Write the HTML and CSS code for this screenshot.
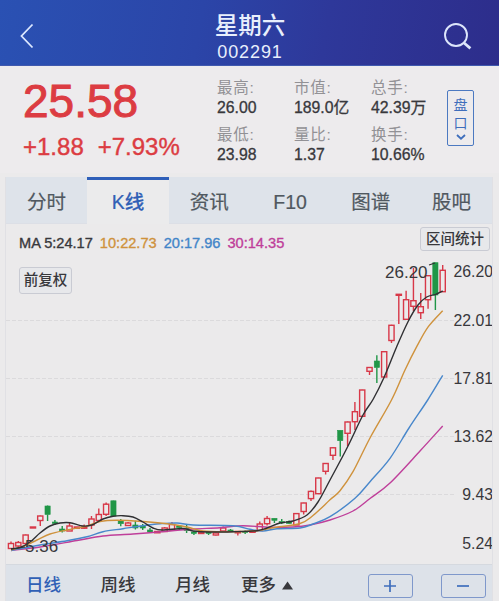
FILE: index.html
```
<!DOCTYPE html>
<html lang="zh-Hans">
<head>
    <meta charset="UTF-8">
    <meta name="viewport" content="width=device-width, initial-scale=1.0">
    <title>星期六 002291</title>
    <link rel="stylesheet" href="styles.css">
</head>
<body>
    <header class="header">
        <svg class="back" width="14" height="26" viewBox="0 0 14 26"><path d="M12.5 1.5L1.5 13L12.5 24.5"/></svg>
        <div class="title">
            <h1>星期六</h1>
            <p>002291</p>
        </div>
        <svg class="search" width="28" height="28" viewBox="0 0 28 28"><circle cx="12" cy="12" r="11"/><path class="handle" d="M19.8 19.8L26.4 25.4"/></svg>
    </header>

    <section class="quote">
        <div class="price">
            <div class="now">25.58</div>
            <div class="change"><span>+1.88</span><span>+7.93%</span></div>
        </div>
        <dl class="stats">
            <div><dt>最高:</dt><dd>26.00</dd></div>
            <div><dt>市值:</dt><dd>189.0亿</dd></div>
            <div><dt>总手:</dt><dd>42.39万</dd></div>
            <div><dt>最低:</dt><dd>23.98</dd></div>
            <div><dt>量比:</dt><dd>1.37</dd></div>
            <div><dt>换手:</dt><dd>10.66%</dd></div>
        </dl>
        <button class="pankou">
            <span>盘</span><span>口</span>
            <svg width="10" height="6" viewBox="0 0 10 6"><path d="M1 1L5 4.7L9 1"/></svg>
        </button>
    </section>

    <main class="panel">
        <nav class="tabs">
            <a>分时</a>
            <a class="active">K线</a>
            <a>资讯</a>
            <a>F10</a>
            <a>图谱</a>
            <a>股吧</a>
        </nav>

        <div class="chart">
            <svg id="kline" width="488" height="340" viewBox="5 224 488 340"></svg>
            <div class="legend">
                <span>MA 5:24.17</span>
                <span class="ma10">10:22.73</span>
                <span class="ma20">20:17.96</span>
                <span class="ma30">30:14.35</span>
            </div>
            <button class="tag stat">区间统计</button>
            <button class="tag fuquan">前复权</button>
        </div>

        <div class="toolbar">
            <a class="active">日线</a>
            <a>周线</a>
            <a class="month">月线</a>
            <a class="more">更多<svg width="11" height="9" viewBox="0 0 11 9"><path d="M5.5 0.5L11 8.5H0Z"/></svg></a>
            <button class="zoom in"><svg width="14" height="14" viewBox="0 0 14 14"><path d="M1 7H13M7 1V13"/></svg></button>
            <button class="zoom"><svg width="14" height="14" viewBox="0 0 14 14"><path d="M1 7H13"/></svg></button>
        </div>
    </main>

    <script>
        const svg = document.getElementById('kline');
        const STEP = 7.317;
        const START = 11;

        // [up/down, high, body top, body bottom, low]
        const candles = [
            ['r', 541.5, 543.5, 548.5, 549], ['r', 541, 542.5, 546, 547], ['r', 534.5, 535, 543.5, 544],
            ['r', 527.5, 527, 528, 528], ['r', 515.5, 516, 520.5, 526], ['g', 505.5, 506, 514.5, 521],
            ['g', 520, 522, 523.5, 525], ['g', 526, 529, 531, 532.5], ['r', 522, 526, 531, 531],
            ['r', 527, 527, 528.2, 529], ['r', 524.5, 527, 528.2, 529], ['r', 516, 519, 525, 529],
            ['r', 508.5, 514.5, 520.5, 522], ['r', 502.5, 504.2, 514.3, 516], ['g', 500.5, 500.8, 516, 516],
            ['g', 519, 521, 523.7, 526.3], ['r', 522, 523, 525.5, 526], ['g', 520.7, 525, 528, 529.5],
            ['g', 524, 526, 528, 530], ['g', 528, 530, 532, 533], ['r', 531, 531.5, 532.8, 533],
            ['r', 527, 528, 531.5, 532], ['r', 522, 524.5, 530, 530], ['g', 525, 526, 527.5, 530],
            ['g', 525, 528, 530.5, 533], ['g', 531, 532, 533.5, 535], ['r', 531, 532, 533.5, 534],
            ['g', 531, 532, 533.5, 535], ['r', 532, 533, 535, 535.5], ['r', 526.5, 528, 531, 532],
            ['g', 529, 530, 531, 532], ['r', 531, 531.5, 532.8, 535.5], ['g', 530.5, 531.5, 532.5, 534],
            ['r', 530.5, 531.3, 532.3, 533], ['r', 521.5, 524, 530.5, 531], ['r', 516, 518.5, 523.7, 525.5],
            ['g', 518, 518.3, 520.3, 523], ['g', 519, 521.5, 523, 524], ['g', 520.5, 521.5, 523.5, 524],
            ['r', 513.3, 513.6, 525, 525], ['r', 502.7, 503, 511.5, 514.5], ['r', 490.5, 491.4, 498.6, 501],
            ['r', 477.7, 478, 493.7, 494], ['r', 463, 463.5, 471.3, 474.5], ['r', 447, 447.8, 455.3, 460],
            ['g', 430, 430.3, 440.7, 456.5], ['r', 421.5, 422, 433.3, 446], ['r', 402, 411.7, 421.7, 430],
            ['r', 389.7, 390, 416.3, 416.5], ['r', 367, 367.5, 371.3, 375], ['g', 355.3, 361, 367.5, 383],
            ['r', 351.3, 351.7, 377, 377], ['r', 324.7, 325.3, 340.5, 343], ['r', 294.7, 294.3, 295.3, 324],
            ['r', 290.7, 299.7, 319.3, 320], ['r', 268, 300.7, 306.3, 311], ['r', 293, 306.7, 312.7, 319],
            ['r', 275.3, 275.7, 299.7, 308.7], ['g', 262.5, 262.7, 295, 310], ['r', 265, 270.3, 291.7, 292]
        ];

        const lines = {
            ma30: [[11,550.5],[40,547],[77,540.5],[103,536],[133,534],[170,531],[193,529],[220,527.7],[243,525.7],[270,527.3],[293,527],[310,525],[330,520],[353,511],[370,498.5],[390,483],[420,451],[442.7,426]],
            ma20: [[11,550.5],[40,545],[67,540.7],[87,536.7],[103,531.7],[123,528.7],[143,525.7],[160,523.8],[177,523],[193,525],[233,525.7],[250,529.3],[263,531],[277,528.7],[300,528],[313,524],[330,516.7],[355,498.3],[370,481.7],[390,458.3],[409,428],[427.7,400],[442.7,375.3]],
            ma10: [[11,550],[23,546.5],[37,540],[50,534],[67,530],[87,526],[100,521.5],[117,520.3],[143,521.5],[165,523.5],[187,527],[203,531],[227,531.7],[257,530.7],[273,527.7],[300,523.5],[313,515.5],[330,499.8],[340,490.7],[353,471.7],[370,438],[391.5,400],[405,370],[416.7,346.7],[428.3,326.7],[442.7,310.7]],
            ma5: [[11,549],[20,547.5],[30,542],[40,533],[50,526],[60,523],[70,522.7],[83,526],[92,525],[103,519],[113,516.3],[123,515.7],[133,517],[143,522],[153,528],[162,530],[183,528.5],[193,531],[210,532],[233,531.7],[257,530.7],[267,528],[280,523],[293,521],[307,515],[318,502],[330,480],[347,448],[363,415],[373,399.5],[384,377.5],[396.7,346.7],[408,321.7],[418,305],[426.7,297],[435.7,294.3],[442.7,291]]
        };

        // smooth curve through all points
        function curve(p) {
            let d = `M${p[0][0]} ${p[0][1]}`;
            for (let i = 0; i < p.length - 1; i++) {
                const a = p[i - 1] || p[i], b = p[i], c = p[i + 1], e = p[i + 2] || c;
                d += `C${b[0] + (c[0] - a[0]) / 6} ${b[1] + (c[1] - a[1]) / 6} ${c[0] - (e[0] - b[0]) / 6} ${c[1] - (e[1] - b[1]) / 6} ${c[0]} ${c[1]}`;
            }
            return d;
        }

        let html = '';
        [320.5, 378.5, 436.5, 494.5].forEach(y => {
            html += `<path class="grid" d="M6 ${y}H455"/>`;
        });

        candles.forEach(([type, high, top, bottom, low], i) => {
            const x = START + i * STEP;
            html += `<path class="wick ${type}" d="M${x} ${high}V${top}M${x} ${bottom}V${low}"/>`;
            html += `<rect class="body ${type}" x="${x - 2.6}" y="${top}" width="5.2" height="${bottom - top}"/>`;
        });

        for (const name in lines) {
            html += `<path class="line ${name}" d="${curve(lines[name])}"/>`;
        }

        [['26.20', 277], ['22.01', 326], ['17.81', 384], ['13.62', 442], ['9.43', 500], ['5.24', 549]].forEach(([t, y]) => {
            html += `<text x="493" y="${y}" text-anchor="end">${t}</text>`;
        });
        html += '<text class="mark" x="385" y="278">26.20</text><path class="pointer" d="M429 265L435 263"/>';
        html += '<text class="mark" x="25" y="552">5.36</text><path class="pointer" d="M11 549L25 547"/>';
        svg.innerHTML = html;
    </script>
</body>
</html>
```

FILE: styles.css
```
* {
    box-sizing: border-box;
}
body {
    margin: 0;
    width: 499px;
    height: 601px;
    overflow: hidden;
    background-color: #ebeaeb;
    color: #38383c;
    font-family: "Liberation Sans", "Noto Sans CJK SC", sans-serif;
}
h1, p, dl, dd {
    margin: 0;
    font-weight: normal;
}
button {
    padding: 0;
    font-family: inherit;
    color: inherit;
    background: none;
}
svg {
    display: block;
    fill: none;
}

/* 顶部 */
.header {
    height: 66px;
    padding: 0 27px 0 20px;
    display: flex;
    justify-content: space-between;
    background: linear-gradient(100deg, #2a51b3 0%, #2b45a8 40%, #2e389a 65%, #2d2d8b 100%);
    border-bottom: 1px solid #4059ae;
    color: #e8effc;
}
.back {
    margin-top: 23px;
    stroke: #dce8ff;
    stroke-width: 1.8;
}
.search {
    margin-top: 23px;
    stroke: #dde6fb;
    stroke-width: 1.9;
}
.search .handle {
    stroke-width: 2.8;
}
.title {
    margin-left: 22px;
    text-align: center;
}
.title h1 {
    margin-top: 11px;
    font-size: 23.5px;
    line-height: 30px;
    font-weight: 500;
}
.title p {
    font-size: 18px;
    line-height: 22px;
    letter-spacing: 0.9px;
}

/* 报价 */
.quote {
    height: 107px;
    padding-left: 23px;
    display: flex;
    background-color: #edebed;
}
.price {
    width: 194px;
    color: #dc3c42;
}
.now {
    margin-top: 10px;
    font-size: 46px;
    line-height: 50px;
    -webkit-text-stroke: 1px;
}
.change {
    margin-top: 7px;
    display: flex;
    gap: 14px;
    font-size: 24px;
    line-height: 28px;
    -webkit-text-stroke: 0.4px;
}
.stats {
    padding-top: 12px;
    display: grid;
    grid-template-columns: 77px 77px 76px;
    grid-auto-rows: 46.5px;
    align-content: start;
}
.stats dt {
    font-size: 15.5px;
    line-height: 20px;
    letter-spacing: 0.8px;
    color: #929195;
}
.stats dd {
    font-size: 15.8px;
    line-height: 19px;
    -webkit-text-stroke: 0.3px;
}
.pankou {
    width: 27px;
    height: 56px;
    margin-top: 24px;
    padding-top: 5px;
    display: flex;
    flex-direction: column;
    align-items: center;
    border: 1.5px solid #4c79c1;
    border-radius: 2px;
    color: #3f6ebc;
    font-size: 14px;
}
.pankou span {
    line-height: 18px;
}
.pankou svg {
    margin-top: 2px;
    stroke: #3f6ebc;
    stroke-width: 1.8;
}

/* 图表 */
.panel {
    margin: 4px 6px 0 5px;
    border-left: 1px solid #e0e0e4;
    border-right: 1px solid #e0e0e4;
}
.tabs {
    height: 47px;
    display: grid;
    grid-template-columns: 81px 82px repeat(4, 1fr);
    background-color: #dee3ea;
    border-bottom: 1px solid #dcdfe6;
}
.tabs a {
    font-size: 19.5px;
    line-height: 51px;
    text-align: center;
    color: #505860;
    -webkit-text-stroke: 0.2px;
}
.tabs .active {
    height: 47px;
    border-top: 3px solid #2f5fb9;
    background-color: #ebebec;
    color: #3060b6;
    font-weight: 500;
    line-height: 45px;
}
.chart {
    position: relative;
    height: 340px;
    overflow: hidden;
}
#kline {
    margin-left: -1px;
}
#kline text {
    font-size: 15.8px;
    fill: #38383c;
}
#kline .mark {
    font-size: 17px;
}
.grid {
    stroke: #dbdadc;
    stroke-dasharray: 4 2;
}
.wick {
    stroke-width: 1.4;
}
.wick.r {
    stroke: #d83848;
}
.wick.g {
    stroke: #209647;
}
.body.r {
    stroke: #d83848;
    stroke-width: 1.4;
}
.body.g {
    fill: #209647;
    stroke: #209647;
    stroke-width: 0.6;
}
.line {
    stroke-width: 1.4;
}
.line.ma5 {
    stroke: #303033;
}
.line.ma10 {
    stroke: #cf923c;
}
.line.ma20 {
    stroke: #4887cb;
}
.line.ma30 {
    stroke: #bf3f9a;
}
.pointer {
    stroke: #303033;
    stroke-width: 1.2;
}
.legend {
    position: absolute;
    left: 13px;
    top: 11px;
    display: flex;
    gap: 7px;
    font-size: 14.6px;
    line-height: 17px;
    -webkit-text-stroke: 0.35px;
}
.legend .ma10 {
    color: #cf923c;
}
.legend .ma20 {
    color: #4285c8;
}
.legend .ma30 {
    color: #bf3f9a;
}
.tag {
    position: absolute;
    border: 1px solid #c9cbd3;
    border-radius: 3px;
    background-color: #e7e8eb;
    font-size: 14.5px;
    font-weight: 500;
}
.stat {
    left: 414px;
    top: 3px;
    width: 70px;
    height: 24px;
    line-height: 22px;
}
.fuquan {
    left: 13px;
    top: 43px;
    width: 53px;
    height: 27px;
    line-height: 25px;
}

/* 底部 */
.toolbar {
    height: 37px;
    padding-left: 20px;
    display: flex;
    background-color: #dde2e9;
    border-top: 1px solid #d5d9df;
}
.toolbar a {
    width: 74.5px;
    font-size: 17.5px;
    font-weight: 500;
    line-height: 40px;
}
.toolbar .active {
    color: #3060b6;
}
.toolbar .month {
    width: 66px;
}
.toolbar .more {
    width: 126.5px;
    height: 40px;
    display: flex;
    align-items: center;
    gap: 6px;
}
.more svg {
    fill: #38383c;
}
.zoom {
    width: 45px;
    height: 24px;
    margin-top: 9px;
    display: flex;
    align-items: center;
    justify-content: center;
    border: 1.5px solid #7f98cb;
    border-radius: 3px;
}
.zoom.in {
    margin-right: 28px;
}
.zoom svg {
    stroke: #3f6ebc;
    stroke-width: 1.7;
}
```
